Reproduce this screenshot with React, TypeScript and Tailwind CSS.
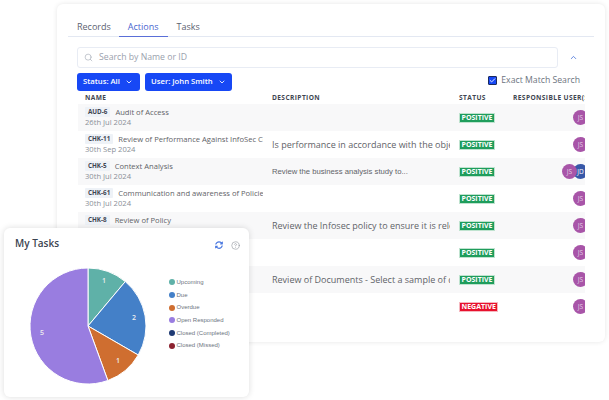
import { ChevronDown, ChevronUp, Check, CircleHelp, Search } from "lucide-react";
import { FaSyncAlt } from "react-icons/fa";

type Row = {
  id?: string;
  title?: string;
  date?: string;
  description?: string;
  smallDescription?: boolean;
  status: "POSITIVE" | "NEGATIVE";
  second?: boolean;
};

const ROWS: Row[] = [
  { id: "AUD-6", title: "Audit of Access", date: "26th Jul 2024", status: "POSITIVE" },
  {
    id: "CHK-11",
    title: "Review of Performance Against InfoSec Compliance",
    date: "30th Sep 2024",
    description: "Is performance in accordance with the objectives",
    status: "POSITIVE",
  },
  {
    id: "CHK-5",
    title: "Context Analysis",
    date: "30th Jul 2024",
    description: "Review the business analysis study to...",
    smallDescription: true,
    status: "POSITIVE",
    second: true,
  },
  {
    id: "CHK-61",
    title: "Communication and awareness of Policies",
    date: "30th Jul 2024",
    status: "POSITIVE",
  },
  {
    id: "CHK-8",
    title: "Review of Policy",
    date: "30th Jul 2024",
    description: "Review the Infosec policy to ensure it is relevant",
    status: "POSITIVE",
  },
  { status: "POSITIVE" },
  { description: "Review of Documents - Select a sample of documents", status: "POSITIVE" },
  { status: "NEGATIVE" },
];

const LEGEND = [
  { label: "Upcoming", color: "bg-[#5fb1a8]" },
  { label: "Due", color: "bg-[#4480c8]" },
  { label: "Overdue", color: "bg-[#cf6e30]" },
  { label: "Open Responded", color: "bg-[#997de0]" },
  { label: "Closed (Completed)", color: "bg-[#1f3a73]" },
  { label: "Closed (Missed)", color: "bg-[#8c2230]" },
];

function MyTasks() {
  return (
    <div className="absolute left-[4px] top-[228px] w-[245px] h-[169px] bg-white rounded-md shadow-[0_0_6px_rgba(0,0,0,0.14)]">
      <div className="flex items-center pl-[11px] pr-[9px] pt-[8px]">
        <span className="text-[10px] font-semibold text-[#3b4350]">My Tasks</span>
        <FaSyncAlt size={8} className="ml-auto mr-[1px] mt-[3px] text-[#4a78e0]" />
        <CircleHelp size={9} strokeWidth={1.5} className="ml-[7px] mt-[3px] text-[#8a8f98]" />
      </div>
      <div className="flex items-start mt-[16px] pl-[25px]">
        <svg width="118" height="118" viewBox="0 0 118 118" className="shrink-0">
          <g stroke="#ffffff" strokeWidth="1">
            <path d="M59 59 L59 1 A58 58 0 0 1 96.28 14.57 Z" fill="#5fb1a8" />
            <path d="M59 59 L96.28 14.57 A58 58 0 0 1 109.23 88 Z" fill="#4480c8" />
            <path d="M59 59 L109.23 88 A58 58 0 0 1 78.84 113.5 Z" fill="#cf6e30" />
            <path d="M59 59 L78.84 113.5 A58 58 0 1 1 59 1 Z" fill="#997de0" />
          </g>
          <g fontSize="7" fontWeight="600" fill="#eeeeee" textAnchor="middle">
            <text x="75" y="16">1</text>
            <text x="105" y="53">2</text>
            <text x="89" y="96">1</text>
            <text x="13" y="68">5</text>
          </g>
        </svg>
        <div className="flex flex-col ml-[22px] mt-[9px] font-['Liberation_Sans',sans-serif]">
          {LEGEND.map((item) => (
            <div key={item.label} className="flex items-center h-[12.7px] text-[6px] text-[#6d7480]">
              <span className={`w-[6px] h-[6px] rounded-full mr-[1.5px] ${item.color}`} />
              {item.label}
            </div>
          ))}
        </div>
      </div>
    </div>
  );
}

function TableRow({ row, striped }: { row: Row; striped: boolean }) {
  return (
    <div
      className={`grid grid-cols-[194px_187px_54px_72px] h-[27px] items-center ${
        striped ? "bg-[#f8f8f9]" : "bg-white"
      }`}
    >
      <div className="pl-[7px] -mt-[1px] leading-[10px] whitespace-nowrap">
        <div className="w-[178px] overflow-hidden">
          {row.id && (
            <div className="flex items-center">
              <span className="px-[3px] bg-[#eef2f7] rounded-[1px] text-[6.3px] font-bold text-[#3f4652]">{row.id}</span>
              <span className="ml-[5px] text-[7.6px] text-[#5f6368]">{row.title}</span>
            </div>
          )}
          {row.date && <div className="text-[7.6px] text-[#8a8f98]">{row.date}</div>}
        </div>
      </div>
      <div
        className={`w-[178px] overflow-hidden whitespace-nowrap text-[#5f6368] ${
          row.smallDescription ? "text-[7.7px] font-['Liberation_Sans',sans-serif]" : "text-[9px]"
        }`}
      >
        {row.description}
      </div>
      <div>
        <span
          className={`block w-fit px-[1.5px] text-[7px] leading-[8px] font-bold text-white border-[0.5px] ${
            row.status === "POSITIVE" ? "bg-[#1f9d5c] border-[#bfe3cf]" : "bg-[#e8112d] border-[#f5b8c0]"
          }`}
        >
          {row.status}
        </span>
      </div>
      <div className="relative flex items-center overflow-hidden h-full pl-[60px]">
        {row.second ? (
          <>
            <span className="absolute left-[60px] w-[15px] h-[15px] rounded-full bg-[#3858a8] text-[6.5px] text-white flex items-center justify-center">
              JD
            </span>
            <span className="absolute left-[49px] w-[15px] h-[15px] rounded-full bg-[#a855a8] text-[6.5px] text-white/70 flex items-center justify-center">
              JS
            </span>
          </>
        ) : (
          <span className="shrink-0 w-[15px] h-[15px] rounded-full bg-[#a855a8] text-[6.5px] text-white/70 flex items-center justify-center">
            JS
          </span>
        )}
      </div>
    </div>
  );
}

export default function App() {
  return (
    <div className="relative w-[609px] h-[400px] overflow-hidden bg-white pt-[4px] pl-[57px] font-['Open_Sans',sans-serif]">
      <div className="w-[548px] h-[338px] bg-white rounded-md shadow-[0_0_5px_rgba(0,0,0,0.1)] pt-[15px] pl-[11px] pr-[11px]">
        <div className="flex h-[18px] border-b border-[#e3e8f2] text-[9px] leading-[16px] text-[#5c6270]">
          <span className="px-[9px]">Records</span>
          <span className="-ml-[1px] px-[9px] h-[18px] border-b-[1px] border-[#5a6fd8] text-[#4a66d0]">Actions</span>
          <span className="ml-[9px]">Tasks</span>
        </div>

        <div className="flex items-center mt-[10px] ml-[9px]">
          <div className="flex items-center w-[481px] h-[21px] border border-[#e8ecf4] rounded-[3px] pl-[6px]">
            <Search size={9} strokeWidth={1.5} className="text-[#9aa1ad]" />
            <span className="ml-[6px] text-[8.7px] text-[#9aa1ad]">Search by Name or ID</span>
          </div>
          <ChevronUp size={9} strokeWidth={2} className="ml-[11px] text-[#3566d6]" />
        </div>

        <div className="flex items-center mt-[5px] ml-[9px] whitespace-nowrap">
          <span className="flex items-center w-[63px] h-[18px] pl-[6px] bg-[#1748f5] rounded-[3px] text-[7.7px] font-semibold text-white">
            Status: All
            <ChevronDown size={8} strokeWidth={2.5} className="ml-[5px]" />
          </span>
          <span className="flex items-center w-[87px] h-[18px] ml-[5px] pl-[6px] bg-[#1748f5] rounded-[3px] text-[7.7px] font-semibold text-white">
            User: John Smith
            <ChevronDown size={8} strokeWidth={2.5} className="ml-[5px]" />
          </span>
          <span className="flex items-center ml-auto mr-[14px] -mt-[3px] text-[8.7px] text-[#6d7480]">
            <span className="flex items-center justify-center w-[9px] h-[9px] mr-[4px] bg-[#1748f5] border border-[#1a2a60] rounded-[1px]">
              <Check size={7} strokeWidth={3} className="text-white" />
            </span>
            Exact Match Search
          </span>
        </div>

        <div className="w-[507px] ml-[10px]">
          <div className="grid grid-cols-[194px_187px_54px_72px] h-[13px] items-center text-[6.6px] font-bold tracking-[0.4px] text-[#3f4652] whitespace-nowrap">
            <span className="pl-[7px]">NAME</span>
            <span>DESCRIPTION</span>
            <span>STATUS</span>
            <span className="overflow-hidden">RESPONSIBLE USER(S)</span>
          </div>
          {ROWS.map((row, i) => (
            <TableRow key={i} row={row} striped={i % 2 === 0} />
          ))}
        </div>
      </div>
      <MyTasks />
    </div>
  );
}
